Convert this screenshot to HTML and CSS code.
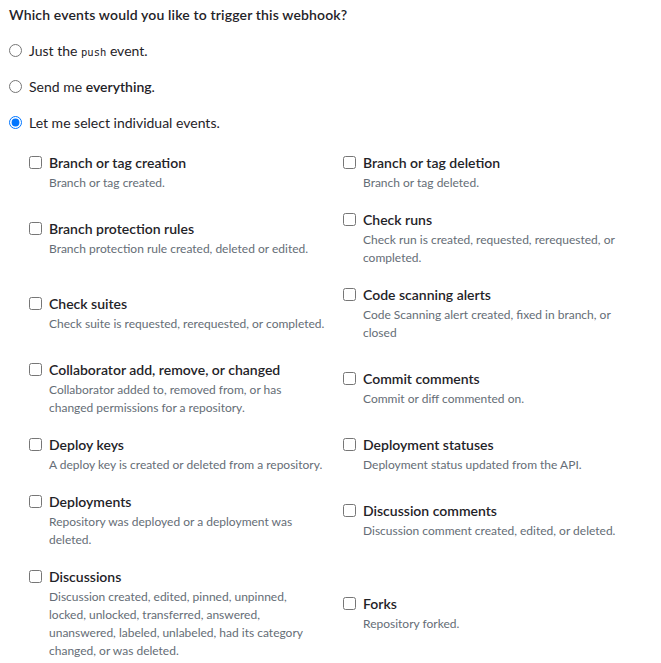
FILE: index.html
```html
<!DOCTYPE html>
<html>
<head>
<meta charset="utf-8">
<link rel="stylesheet" href="styles.css">
</head>
<body>
<div class="events">
  <h2 class="events-title">Which events would you like to trigger this webhook?</h2>
  <div class="choices">
    <label class="radio-row"><input type="radio" name="ev"><span>Just the <code>push</code> event.</span></label>
    <label class="radio-row"><input type="radio" name="ev"><span>Send me <strong>everything</strong>.</span></label>
    <label class="radio-row"><input type="radio" name="ev" checked><span>Let me select individual events.</span></label>
  </div>
  <div class="event-grid">
    <label class="event"><input type="checkbox"><div class="event-text"><div class="event-name">Branch or tag creation</div><p class="event-note">Branch or tag created.</p></div></label>
    <label class="event"><input type="checkbox"><div class="event-text"><div class="event-name">Branch or tag deletion</div><p class="event-note">Branch or tag deleted.</p></div></label>
    <label class="event"><input type="checkbox"><div class="event-text"><div class="event-name">Branch protection rules</div><p class="event-note">Branch protection rule created, deleted or edited.</p></div></label>
    <label class="event"><input type="checkbox"><div class="event-text"><div class="event-name">Check runs</div><p class="event-note">Check run is created, requested, rerequested, or completed.</p></div></label>
    <label class="event"><input type="checkbox"><div class="event-text"><div class="event-name">Check suites</div><p class="event-note">Check suite is requested, rerequested, or completed.</p></div></label>
    <label class="event"><input type="checkbox"><div class="event-text"><div class="event-name">Code scanning alerts</div><p class="event-note">Code Scanning alert created, fixed in branch, or closed</p></div></label>
    <label class="event"><input type="checkbox"><div class="event-text"><div class="event-name">Collaborator add, remove, or changed</div><p class="event-note">Collaborator added to, removed from, or has changed permissions for a repository.</p></div></label>
    <label class="event"><input type="checkbox"><div class="event-text"><div class="event-name">Commit comments</div><p class="event-note">Commit or diff commented on.</p></div></label>
    <label class="event"><input type="checkbox"><div class="event-text"><div class="event-name">Deploy keys</div><p class="event-note">A deploy key is created or deleted from a repository.</p></div></label>
    <label class="event"><input type="checkbox"><div class="event-text"><div class="event-name">Deployment statuses</div><p class="event-note">Deployment status updated from the API.</p></div></label>
    <label class="event"><input type="checkbox"><div class="event-text"><div class="event-name">Deployments</div><p class="event-note">Repository was deployed or a deployment was deleted.</p></div></label>
    <label class="event"><input type="checkbox"><div class="event-text"><div class="event-name">Discussion comments</div><p class="event-note">Discussion comment created, edited, or deleted.</p></div></label>
    <label class="event"><input type="checkbox"><div class="event-text"><div class="event-name">Discussions</div><p class="event-note">Discussion created, edited, pinned, unpinned, locked, unlocked, transferred, answered, unanswered, labeled, unlabeled, had its category changed, or was deleted.</p></div></label>
    <label class="event"><input type="checkbox"><div class="event-text"><div class="event-name">Forks</div><p class="event-note">Repository forked.</p></div></label>
  </div>
</div>
</body>
</html>
```
FILE: styles.css
```css
html, body {
  margin: 0;
  background: #ffffff;
}
body {
  padding: 4px 0 0 9px;
  font-family: Lato, "Liberation Sans", sans-serif;
  font-size: 14px;
  line-height: 21px;
  color: #1f2328;
}
.events-title {
  margin: 0;
  font-size: 14px;
  line-height: 21px;
  font-weight: 600;
  letter-spacing: 0.15px;
}
.choices {
  display: flex;
  flex-direction: column;
  gap: 15px;
  margin-top: 15px;
}
.radio-row {
  display: flex;
  align-items: flex-start;
  line-height: 21px;
}
.radio-row input {
  width: 13px;
  height: 13px;
  margin: 4px 7px 0 0;
  flex: none;
  accent-color: #0075ff;
}
.radio-row strong {
  font-weight: 600;
}
.radio-row code {
  font-family: "DejaVu Sans Mono", "Liberation Mono", monospace;
  font-size: 10.5px;
  line-height: 1;
}
.event-grid {
  display: grid;
  grid-template-columns: 314px 314px;
  row-gap: 17px;
  align-items: center;
  margin: 19px 0 0 20px;
}
.event {
  display: flex;
  align-items: flex-start;
}
.event input {
  width: 13px;
  height: 13px;
  margin: 4px 7px 0 0;
  flex: none;
}
.event-text {
  width: 276px;
}
.event-name {
  font-size: 14px;
  line-height: 21px;
  font-weight: 600;
  color: #1f2328;
}
.event-note {
  margin: 1px 0 0;
  font-size: 12px;
  line-height: 18px;
  color: #656d76;
}
```
